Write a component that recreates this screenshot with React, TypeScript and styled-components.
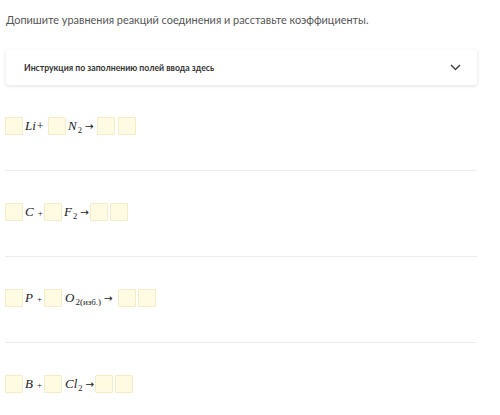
import React from 'react';
import styled, { createGlobalStyle } from 'styled-components';

const GlobalStyle = createGlobalStyle`
  html, body {
    margin: 0;
    padding: 0;
    background: #ffffff;
  }
`;

const Page = styled.div`
  width: 472px;
  padding: 12px 0 0 5px;
  font-family: 'Lato', 'Open Sans', sans-serif;
`;

const Title = styled.div`
  font-size: 10.9px;
  line-height: 16px;
  color: #555;
  padding-left: 1px;
  margin-bottom: 22px;
`;

const Panel = styled.div`
  margin-left: 1px;
  height: 35px;
  display: flex;
  align-items: center;
  justify-content: space-between;
  padding: 0 16px 0 18px;
  background: #fff;
  border-radius: 3px;
  box-shadow: 0 1px 4px rgba(0, 0, 0, 0.12);
`;

const PanelText = styled.span`
  font-size: 8.7px;
  font-weight: 700;
  color: #333;
`;

const Row = styled.div<{ $last?: boolean }>`
  display: flex;
  align-items: center;
  height: 18px;
  padding: 32px 0 35px;
  border-bottom: ${p => (p.$last ? 'none' : '1px solid #ececec')};
`;

const Box = styled.span<{ $gap?: number }>`
  box-sizing: border-box;
  width: 18px;
  height: 18px;
  flex: none;
  background: #fffbe3;
  border: 1px solid #f2ecc8;
  border-radius: 1px;
  margin-right: ${p => p.$gap ?? 0}px;
`;

const Mathy = styled.span<{ $w: number; $indent?: number }>`
  box-sizing: border-box;
  width: ${p => p.$w}px;
  flex: none;
  display: flex;
  align-items: baseline;
  font-family: 'Liberation Serif', 'DejaVu Serif', serif;
  font-style: italic;
  font-size: 13px;
  color: #222;
  white-space: nowrap;
  padding-left: ${p => p.$indent ?? 2}px;
`;

const Plus = styled.span<{ $small?: boolean }>`
  font-style: normal;
  font-size: ${p => (p.$small ? 9 : 12)}px;
  margin-left: ${p => (p.$small ? 4 : 1)}px;
`;

const Arrow = styled.span`
  font-family: 'DejaVu Sans', sans-serif;
  font-style: normal;
  font-size: 10.5px;
  margin-left: 3px;
`;

const Sub = styled.span<{ $size?: number }>`
  font-style: normal;
  font-size: ${p => p.$size ?? 8.5}px;
  position: relative;
  top: 3px;
  margin-left: 1px;
`;

const Chevron = () => (
  <svg width="11" height="7" viewBox="0 0 11 7">
    <path d="M1 1l4.5 4.5L10 1" fill="none" stroke="#444" strokeWidth="1.5" />
  </svg>
);

export default function App() {
  return (
    <>
      <GlobalStyle />
      <Page>
        <Title>Допишите уравнения реакций соединения и расставьте коэффициенты.</Title>
        <Panel>
          <PanelText>Инструкция по заполнению полей ввода здесь</PanelText>
          <Chevron />
        </Panel>
        <Row>
          <Box />
          <Mathy $w={25}>Li<Plus>+</Plus></Mathy>
          <Box />
          <Mathy $w={31}>N<Sub>2</Sub><Arrow>→</Arrow></Mathy>
          <Box $gap={3} />
          <Box />
        </Row>
        <Row>
          <Box />
          <Mathy $w={21}>C<Plus $small>+</Plus></Mathy>
          <Box />
          <Mathy $w={28} $indent={2}>F<Sub>2</Sub><Arrow>→</Arrow></Mathy>
          <Box $gap={2} />
          <Box />
        </Row>
        <Row>
          <Box />
          <Mathy $w={21}>P<Plus $small>+</Plus></Mathy>
          <Box />
          <Mathy $w={56} $indent={3}>O<Sub $size={9}>2(изб.)</Sub><Arrow>→</Arrow></Mathy>
          <Box $gap={2} />
          <Box />
        </Row>
        <Row $last>
          <Box />
          <Mathy $w={21}>B<Plus $small>+</Plus></Mathy>
          <Box />
          <Mathy $w={33} $indent={3}>Cl<Sub>2</Sub><Arrow>→</Arrow></Mathy>
          <Box $gap={2} />
          <Box />
        </Row>
      </Page>
    </>
  );
}
